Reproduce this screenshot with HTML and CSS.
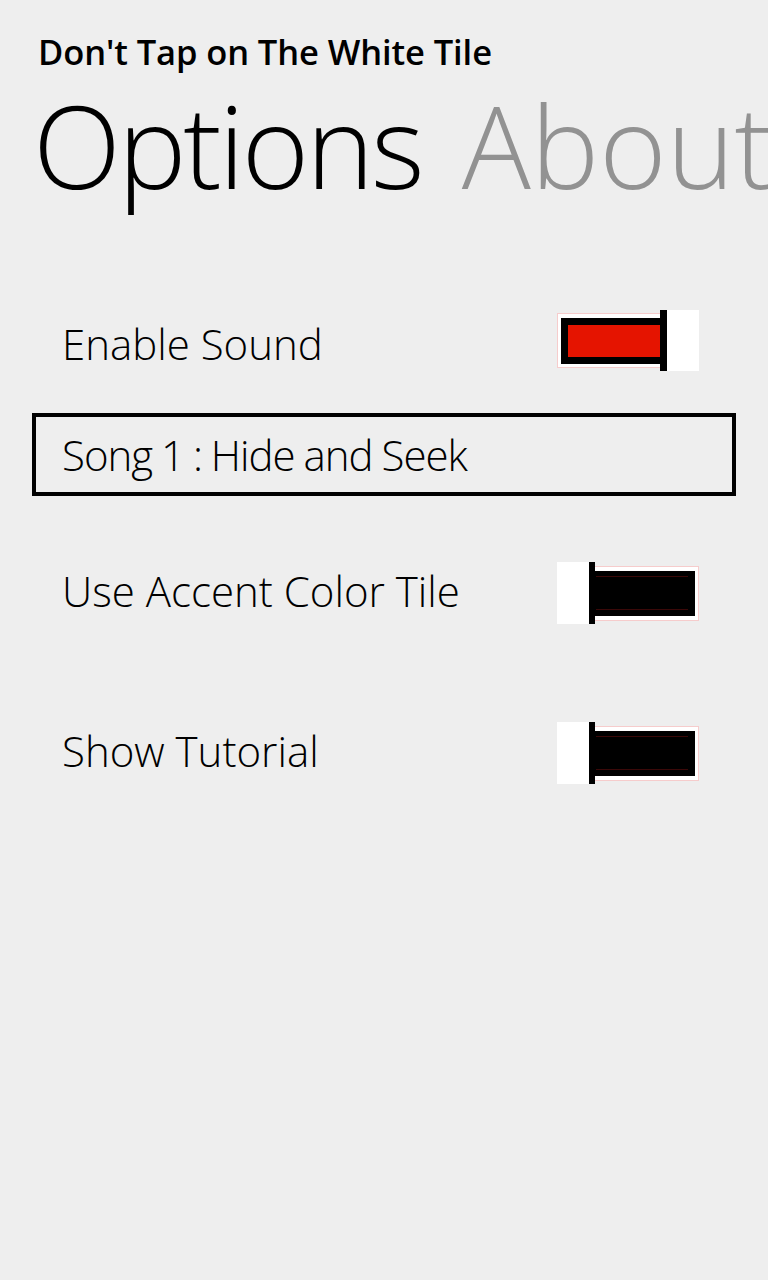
FILE: index.html
```html
<!DOCTYPE html>
<html lang="en">
<head>
<meta charset="utf-8">
<title>Don't Tap on The White Tile - Options</title>
<link rel="stylesheet" href="styles.css">
</head>
<body>
<div class="page">
  <header class="app-header">
    <div class="app-title">Don't Tap on The White Tile</div>
    <div class="pivot">
      <span class="pivot-item active">Options</span>
      <span class="pivot-item">About</span>
    </div>
  </header>
  <main class="settings">
    <div class="row row-sound">
      <span class="label">Enable Sound</span>
      <div class="toggle on">
        <div class="track-on"><div class="fill-on"></div></div>
        <div class="thumb"></div>
        <div class="pad"></div>
      </div>
    </div>
    <div class="song-box">
      <span class="song-label">Song 1 : Hide and Seek</span>
    </div>
    <div class="row row-accent">
      <span class="label">Use Accent Color Tile</span>
      <div class="toggle off">
        <div class="pad"></div>
        <div class="thumb"></div>
        <div class="track-off"><div class="fill-off"><div class="fill-line"></div></div></div>
      </div>
    </div>
    <div class="row row-tutorial">
      <span class="label">Show Tutorial</span>
      <div class="toggle off">
        <div class="pad"></div>
        <div class="thumb"></div>
        <div class="track-off"><div class="fill-off"><div class="fill-line"></div></div></div>
      </div>
    </div>
  </main>
</div>
</body>
</html>
```
FILE: styles.css
```css
html, body {
  margin: 0;
  padding: 0;
  background: #eeeeee;
}

body {
  font-family: "Open Sans", "Noto Sans", sans-serif;
  color: #000;
  width: 768px;
  height: 1280px;
  overflow: hidden;
}

.page {
  width: 768px;
}

.app-header {
  padding: 32px 0 0 38px;
}

.app-title {
  font-size: 34.5px;
  font-weight: 600;
  line-height: 40px;
  letter-spacing: -0.1px;
  white-space: nowrap;
}

.pivot {
  margin-top: 23px;
  margin-left: -5px;
  display: flex;
  gap: 40px;
  white-space: nowrap;
  overflow: hidden;
  font-size: 115px;
  font-weight: 300;
  line-height: 100px;
  height: 120px;
}

.pivot-item {
  color: #929292;
}

.pivot-item.active {
  color: #000;
  letter-spacing: -3px;
}

.settings {
  margin-top: 95px;
  padding: 0 32px;
  display: flex;
  flex-direction: column;
}

.row {
  display: flex;
  justify-content: space-between;
  align-items: flex-start;
  padding-left: 30px;
  padding-right: 37px;
  height: 62px;
}

.label {
  font-size: 42px;
  font-weight: 300;
  line-height: 52px;
  padding-top: 3px;
  white-space: nowrap;
}

.row-sound .label {
  padding-top: 8px;
}

.song-box {
  margin-top: 41px;
  border: 4px solid #000;
  height: 83px;
  box-sizing: border-box;
  padding-left: 26px;
}

.song-label {
  display: block;
  font-size: 42px;
  font-weight: 300;
  line-height: 76px;
  letter-spacing: -1px;
  word-spacing: -1px;
  white-space: nowrap;
}

.row-accent {
  margin-top: 66px;
}

.row-tutorial {
  margin-top: 98px;
}

/* Toggle switch */
.toggle {
  display: flex;
  align-items: center;
  width: 142px;
  height: 62px;
}

.toggle.on {
  height: 61px;
}

.thumb {
  width: 7px;
  height: 100%;
  background: #000;
  flex: none;
}

.toggle.off .thumb {
  width: 6px;
}

.pad {
  width: 32px;
  height: 100%;
  background: #fff;
  flex: none;
}

.track-on {
  width: 103px;
  height: 55px;
  box-sizing: border-box;
  background: #fff;
  border: 1px solid #f6cccc;
  border-right: none;
  padding: 4px 0 3px 3px;
  display: flex;
  flex: none;
}

.fill-on {
  flex: 1;
  background: #e51400;
  border: 7px solid #000;
  border-right: none;
}

.track-off {
  width: 104px;
  height: 55px;
  box-sizing: border-box;
  background: #fff;
  border: 1px solid #f6cccc;
  border-left: none;
  padding: 4px 3px 4px 0;
  display: flex;
  flex: none;
}

.fill-off {
  flex: 1;
  background: #000;
  padding: 5px 7px 6px 1px;
  display: flex;
}

.fill-line {
  flex: 1;
  border-top: 1px solid #3a0808;
  border-bottom: 1px solid #3a0808;
}
```
